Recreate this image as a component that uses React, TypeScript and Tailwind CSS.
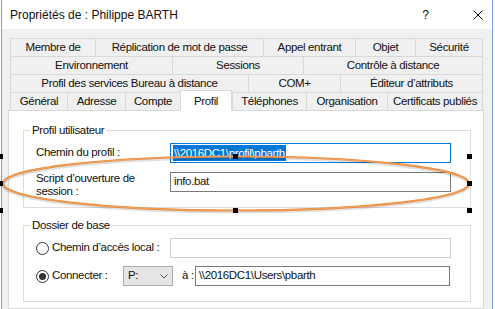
import React from 'react';

interface Tab {
  label: string;
  w: string;
  selected?: boolean;
}

const tabRows: Tab[][] = [
  [
    { label: 'Membre de', w: 'w-[85px]' },
    { label: 'Réplication de mot de passe', w: 'w-[168px]' },
    { label: 'Appel entrant', w: 'w-[92px]' },
    { label: 'Objet', w: 'w-[60px]' },
    { label: 'Sécurité', w: 'w-[68px]' },
  ],
  [
    { label: 'Environnement', w: 'w-[162px]' },
    { label: 'Sessions', w: 'w-[131px]' },
    { label: 'Contrôle à distance', w: 'w-[180px]' },
  ],
  [
    { label: 'Profil des services Bureau à distance', w: 'w-[238px]' },
    { label: 'COM+', w: 'w-[92px]' },
    { label: 'Éditeur d’attributs', w: 'w-[143px]' },
  ],
  [
    { label: 'Général', w: 'w-[57px]' },
    { label: 'Adresse', w: 'w-[58px]' },
    { label: 'Compte', w: 'w-[55px]' },
    { label: 'Profil', w: 'w-[52px]', selected: true },
    { label: 'Téléphones', w: 'w-[74px]' },
    { label: 'Organisation', w: 'w-[81px]' },
    { label: 'Certificats publiés', w: 'w-[96px]' },
  ],
];

const handles = [
  'left-[-2px] top-[154px]',
  'left-[233px] top-[154px]',
  'left-[467px] top-[154px]',
  'left-[-2px] top-[181px]',
  'left-[467px] top-[181px]',
  'left-[-2px] top-[208px]',
  'left-[233px] top-[208px]',
  'left-[467px] top-[208px]',
];

const Radio: React.FC<{ checked?: boolean }> = ({ checked }) => (
  <div className="w-[13px] h-[13px] rounded-full border border-[#333333] bg-white flex items-center justify-center shrink-0">
    {checked && <div className="w-[7px] h-[7px] rounded-full bg-[#333333]" />}
  </div>
);

const App: React.FC = () => {
  return (
    <div className="relative w-[495px] h-[309px] overflow-hidden bg-white text-[11.5px] text-[#111111] font-['Liberation_Sans',Arial,sans-serif]">
      <div className="ml-px w-[492px] h-full border-x border-[#6ea6dd] flex flex-col">
        {/* Title bar */}
        <div className="h-[29px] shrink-0 flex items-center pl-[8px] pr-[9px] bg-white">
          <span className="flex-1 text-[12px]">Propriétés de : Philippe BARTH</span>
          <span className="mr-[44px] text-[12px]">?</span>
          <svg width="10" height="10" viewBox="0 0 10 10">
            <path d="M0.5 0.5 L9.5 9.5 M9.5 0.5 L0.5 9.5" stroke="#111" strokeWidth="1" />
          </svg>
        </div>

        {/* Body */}
        <div className="flex-1 bg-[#f0f0f0] pl-[6px] pt-[9px] flex flex-col tracking-[-0.35px]">
          <div className="ml-[2px] w-[473px]">
            {tabRows.map((row, i) => (
              <div key={i} className="flex items-end h-[18px]">
                {row.map((tab, j) =>
                  tab.selected ? (
                    <div
                      key={j}
                      className={`${tab.w} h-[21px] -mb-px relative z-10 bg-white border-t border-x border-[#d9d9d9] flex items-start justify-center pt-[2px] whitespace-nowrap`}
                    >
                      {tab.label}
                    </div>
                  ) : (
                    <div
                      key={j}
                      className={`${tab.w} h-[18px] border-t border-l border-[#d9d9d9] flex items-center justify-center whitespace-nowrap ${
                        j === row.length - 1 ? 'border-r' : ''
                      }`}
                    >
                      {tab.label}
                    </div>
                  )
                )}
              </div>
            ))}
          </div>

          {/* Panel */}
          <div className="w-[476px] flex-1 bg-white border border-[#d9d9d9] pt-[12px] pl-[14px]">
            <fieldset className="w-[448px] border border-[#dcdcdc] pb-[9px]">
              <legend className="ml-[6px] px-[2px] leading-[14px]">Profil utilisateur</legend>
              <div className="px-[12px] pt-[6px]">
                <div className="flex items-center h-[20px]">
                  <div className="w-[134px] shrink-0">Chemin du profil :</div>
                  <div className="w-[281px] h-[20px] border border-[#0078d7] flex items-center pl-[2px]">
                    <span className="bg-[#0078d7] text-white leading-[16px] px-px">
                      {'\\\\2016DC1\\profil\\pbarth'}
                    </span>
                  </div>
                </div>
                <div className="flex items-start mt-[9px]">
                  <div className="w-[134px] shrink-0 leading-[13px]">
                    Script d’ouverture de
                    <br />
                    session :
                  </div>
                  <div className="w-[281px] h-[20px] border border-[#7a7a7a] flex items-center pl-[3px]">
                    info.bat
                  </div>
                </div>
              </div>
            </fieldset>

            <fieldset className="mt-[10px] w-[448px] border border-[#dcdcdc] pb-[15px]">
              <legend className="ml-[6px] px-[2px] leading-[14px]">Dossier de base</legend>
              <div className="px-[12px] pt-[6px]">
                <div className="flex items-center h-[20px]">
                  <div className="w-[134px] shrink-0 flex items-center">
                    <Radio />
                    <span className="ml-[3px]">Chemin d’accès local :</span>
                  </div>
                  <div className="w-[281px] h-[20px] border border-[#cccccc] bg-white" />
                </div>
                <div className="flex items-center h-[20px] mt-[8px]">
                  <div className="w-[87px] shrink-0 flex items-center">
                    <Radio checked />
                    <span className="ml-[3px]">Connecter :</span>
                  </div>
                  <div className="w-[50px] shrink-0 h-[20px] border border-[#acacac] bg-[#e5e5e5] flex items-center justify-between pl-[4px] pr-[4px]">
                    <span>P:</span>
                    <svg width="8" height="5" viewBox="0 0 8 5">
                      <path d="M0.5 0.5 L4 4 L7.5 0.5" stroke="#555" strokeWidth="1" fill="none" />
                    </svg>
                  </div>
                  <span className="w-[22px] shrink-0 pl-[9px] whitespace-nowrap">à :</span>
                  <div className="w-[255px] shrink-0 h-[20px] border border-[#7a7a7a] flex items-center pl-[3px]">
                    {'\\\\2016DC1\\Users\\pbarth'}
                  </div>
                </div>
              </div>
            </fieldset>
          </div>
        </div>
      </div>

      {/* Annotation ellipse */}
      <svg className="absolute left-0 top-0 pointer-events-none" width="495" height="309" viewBox="0 0 495 309">
        <ellipse cx="236" cy="185" rx="233" ry="27" fill="none" stroke="rgba(0,0,0,0.12)" strokeWidth="3" />
        <ellipse cx="236" cy="183.5" rx="233" ry="27" fill="none" stroke="#e8893a" strokeWidth="2.2" />
        <ellipse cx="236" cy="183.5" rx="233" ry="27" fill="none" stroke="#f6b47a" strokeWidth="0.6" />
      </svg>

      {/* Selection handles */}
      {handles.map((h, i) => (
        <div key={i} className={`absolute w-[5px] h-[5px] bg-black ${h}`} />
      ))}
    </div>
  );
};

export default App;
